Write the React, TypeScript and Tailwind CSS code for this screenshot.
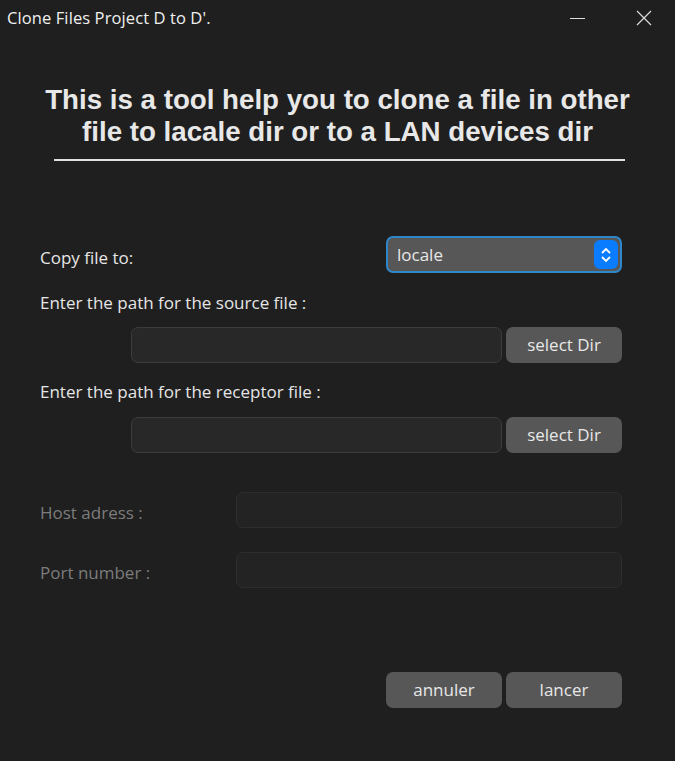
export default function App() {
  return (
    <div
      className="w-[675px] h-[761px] bg-[#1f1f1f] flex flex-col text-[#e6e6e6]"
      style={{ fontFamily: '"Open Sans", "Noto Sans", sans-serif' }}
    >
      {/* title bar */}
      <div className="h-[37px] flex items-center pl-[7px] pr-[23px]">
        <span className="text-[16.5px] tracking-[0.1px] text-[#f0f0f0]">
          Clone Files Project D to D'.
        </span>
        <div className="ml-auto flex items-center">
          <div className="w-[15px] h-px bg-[#dcdcdc] mr-[51px]" />
          <svg width="16" height="16" viewBox="0 0 16 16" className="mb-[2px]">
            <path d="M1 1L15 15M15 1L1 15" stroke="#dcdcdc" strokeWidth="1.2" />
          </svg>
        </div>
      </div>

      {/* heading */}
      <h1
        className="mt-[47px] text-center text-[27.7px] leading-[32px] font-bold text-[#e8e8e8]"
        style={{ fontFamily: '"Liberation Sans", Arial, sans-serif' }}
      >
        This is a tool help you to clone a file in other
        <br />
        file to lacale dir or to a LAN devices dir
      </h1>
      <div className="mt-[11px] ml-[54px] w-[571px] h-[2px] bg-[#e0e0e0]" />

      <div className="pl-[40px] pr-[53px] flex flex-col text-[17px]">
        {/* copy file to */}
        <div className="mt-[75px] flex items-center">
          <span className="pt-[6px]">Copy file to:</span>
          <div className="ml-auto w-[236px] h-[37px] rounded-[7px] border-2 border-[#2f86c8] bg-[#575757] flex items-center pl-[9px] pr-[2px]">
            <span className="text-[#e8e8e8]">locale</span>
            <div className="ml-auto w-[24px] h-[29px] rounded-[6px] bg-[#0a7cff] flex items-center justify-center">
              <svg width="12" height="20" viewBox="0 0 12 20">
                <path
                  d="M2 8L6 4L10 8M2 12L6 16L10 12"
                  stroke="white"
                  strokeWidth="1.8"
                  fill="none"
                />
              </svg>
            </div>
          </div>
        </div>

        {/* source */}
        <div className="mt-[19px] h-[22px] flex items-center">
          Enter the path for the source file :
        </div>
        <div className="mt-[13px] flex gap-[4px] pl-[91px]">
          <div className="flex-1 h-[36px] rounded-[7px] border border-[#3c3c3c] bg-[#282828]" />
          <button className="w-[116px] h-[36px] rounded-[7px] bg-[#575757] text-[#e8e8e8]">
            select Dir
          </button>
        </div>

        {/* receptor */}
        <div className="mt-[18px] h-[22px] flex items-center">
          Enter the path for the receptor file :
        </div>
        <div className="mt-[14px] flex gap-[4px] pl-[91px]">
          <div className="flex-1 h-[36px] rounded-[7px] border border-[#3c3c3c] bg-[#282828]" />
          <button className="w-[116px] h-[36px] rounded-[7px] bg-[#575757] text-[#e8e8e8]">
            select Dir
          </button>
        </div>

        {/* host */}
        <div className="mt-[39px] flex items-center text-[#7c7c7c]">
          <span className="w-[196px] pt-[6px]">Host adress :</span>
          <div className="flex-1 h-[36px] rounded-[7px] border border-[#2e2e2e] bg-[#232323]" />
        </div>
        <div className="mt-[24px] flex items-center text-[#7c7c7c]">
          <span className="w-[196px] pt-[6px]">Port number :</span>
          <div className="flex-1 h-[36px] rounded-[7px] border border-[#2e2e2e] bg-[#232323]" />
        </div>

        {/* actions */}
        <div className="mt-[84px] flex justify-end gap-[4px]">
          <button className="w-[116px] h-[36px] rounded-[7px] bg-[#575757] text-[#e8e8e8]">
            annuler
          </button>
          <button className="w-[116px] h-[36px] rounded-[7px] bg-[#575757] text-[#e8e8e8]">
            lancer
          </button>
        </div>
      </div>
    </div>
  );
}
